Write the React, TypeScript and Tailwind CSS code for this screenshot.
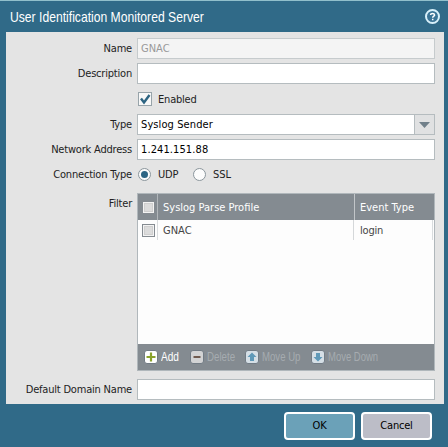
import type { ReactNode } from "react";

const field = "h-[21px] w-[298px] shrink-0 border border-[#b5bcbf] bg-white px-[3px] leading-[20px] tracking-[0.1px] text-black";

function Row({ label, children, className = "" }: { label: string; children: ReactNode; className?: string }) {
  return (
    <div className={`flex h-[21px] items-center ${className}`}>
      <div className="mr-[5px] w-[126px] shrink-0 pt-[2px] text-right whitespace-nowrap text-[#222]">{label}</div>
      {children}
    </div>
  );
}

function Radio({ checked = false }: { checked?: boolean }) {
  return (
    <span className="flex size-[13px] items-center justify-center rounded-full border border-[#8b969c] bg-[#fcfcfc]">
      {checked && <span className="size-[7px] rounded-full bg-[#2c6584]" />}
    </span>
  );
}

function Box() {
  return (
    <span className="ml-px block size-[13px] shrink-0 border border-[#858b91] bg-[#f3f3f3] p-px">
      <span className="block size-full border border-[#cfcfcf] bg-[#dcdcdc]" />
    </span>
  );
}

function ToolIcon({ kind }: { kind: "add" | "delete" | "up" | "down" }) {
  return (
    <svg width="14" height="14" viewBox="0 0 14 14" className="shrink-0">
      <rect x="0.5" y="0.5" width="13" height="13" rx="2.5" fill={kind === "add" ? "#fff" : kind === "delete" ? "#d2d3d4" : "#d5dfe6"} stroke="#727c85" />
      {kind === "add" && <path d="M7 2.5v9M2.5 7h9" stroke="#8aa32c" strokeWidth="2.2" />}
      {kind === "delete" && <path d="M3.5 7h7" stroke="#705b50" strokeWidth="2" />}
      {kind === "up" && <path d="M7 2.5 11.5 7H9v4H5V7H2.5z" fill="#5f99b8" />}
      {kind === "down" && <path d="M7 11.5 2.5 7H5V3h4v4h2.5z" fill="#5f99b8" />}
    </svg>
  );
}

export default function App() {
  return (
    <div className="flex h-[447px] w-[448px] flex-col overflow-hidden border-t border-[#91bfcb] bg-[#306a88] font-['DejaVu_Sans_Condensed','DejaVu_Sans',sans-serif] text-[11px] tracking-[-0.2px] [font-stretch:condensed]">
      <header className="flex h-[31px] shrink-0 items-center justify-between pr-[8px] pl-[10px]">
        <h1 className="origin-left scale-x-[0.81] pt-px font-['Liberation_Sans',sans-serif] text-[15px] tracking-normal whitespace-nowrap text-white [font-stretch:normal]">
          User Identification Monitored Server
        </h1>
        <svg width="15" height="15" viewBox="0 0 15 15">
          <circle cx="7.5" cy="7.5" r="6.5" fill="#3b7597" stroke="#d7f0fa" strokeWidth="2" />
          <path d="M5.5 6Q5.6 4.4 7.5 4.4T9.6 6C9.6 7.2 7.7 7.2 7.7 8.7M7.7 9.8v1.4" fill="none" stroke="#fff" strokeWidth="1.5" />
        </svg>
      </header>
      <main className="ml-[6px] flex h-[372px] w-[438px] shrink-0 flex-col bg-[#e4e4e4] pt-[6px]">
        <Row label="Name">
          <div className="h-[21px] w-[298px] border border-[#c6cbcd] bg-[#f4f4f4] px-[3px] leading-[20px] tracking-normal text-[#999]">GNAC</div>
        </Row>
        <Row label="Description" className="mt-[4px]"><div className={field} /></Row>
        <div className="mt-[4px] flex h-[21px] items-center pl-[132px]">
          <svg width="14" height="14" viewBox="0 0 14 14">
            <rect x="0.5" y="0.5" width="13" height="13" fill="#f8f8f8" stroke="#98a4aa" />
            <path d="m3 6.5 3 4L11.5 3" fill="none" stroke="#2d6482" strokeWidth="2.4" />
          </svg>
          <span className="ml-[6px] pt-[4px] text-[#222]">Enabled</span>
        </div>
        <Row label="Type" className="mt-[5px]">
          <div className={`${field} flex justify-between pr-0`}>
            <span>Syslog Sender</span>
            <span className="flex w-[20px] items-center justify-center border-l border-[#b5bcbf] bg-[#e0e1e2]">
              <svg width="11" height="6" viewBox="0 0 11 6"><path d="M0 0h11L5.5 6z" fill="#71808a" /></svg>
            </span>
          </div>
        </Row>
        <Row label="Network Address" className="mt-[4px]"><div className={field}>1.241.151.88</div></Row>
        <Row label="Connection Type" className="mt-[4px]">
          <div className="flex items-center pl-px text-[#222]">
            <Radio checked />
            <span className="ml-[7px] w-[35px] pt-[2px]">UDP</span>
            <Radio />
            <span className="ml-[7px] pt-[2px] tracking-normal">SSL</span>
          </div>
        </Row>
        <div className="mt-[8px] flex h-[178px]">
          <div className="mr-[5px] w-[126px] pt-[3px] text-right text-[#222]">Filter</div>
          <div className="flex w-[298px] flex-col border border-[#b0b7bb] bg-[#fdfdfd]">
            <div className="flex h-[26px] shrink-0 bg-[#848b91] tracking-normal text-white">
              <div className="flex w-[20px] items-center justify-center border-r border-[#b1b6ba]"><Box /></div>
              <div className="flex w-[197px] items-center border-r border-[#c2c6c9] pt-[3px] pl-[5px]">Syslog Parse Profile</div>
              <div className="flex flex-1 items-center pt-[3px] pl-[5px]">Event Type</div>
            </div>
            <div className="flex h-[20px] shrink-0 text-[#454545]">
              <div className="flex w-[20px] items-center justify-center border-r border-[#d9dcde]"><Box /></div>
              <div className="flex w-[196px] items-center border-r border-[#d5d8da] pt-[3px] pl-[5px] tracking-normal">GNAC</div>
              <div className="mr-px flex flex-1 items-center border-r border-[#d9dcde] pt-[3px] pl-[6px]">login</div>
            </div>
            <div className="flex-1" />
            <div className="flex h-[26px] shrink-0 items-center bg-[#848b91] pl-[6px] font-['Liberation_Sans',sans-serif] text-[12px] tracking-normal whitespace-nowrap text-[#a6abb0] [font-stretch:normal]">
              <div className="flex w-[46px] items-center gap-[3px]"><ToolIcon kind="add" /><span className="origin-left scale-x-[0.84] text-white">Add</span></div>
              <div className="flex w-[55px] items-center gap-[3px]"><ToolIcon kind="delete" /><span className="origin-left scale-x-[0.81]">Delete</span></div>
              <div className="flex w-[66px] items-center gap-[3px]"><ToolIcon kind="up" /><span className="origin-left scale-x-[0.8]">Move Up</span></div>
              <div className="flex items-center gap-[3px]"><ToolIcon kind="down" /><span className="origin-left scale-x-[0.79]">Move Down</span></div>
            </div>
          </div>
        </div>
        <Row label="Default Domain Name" className="mt-[8px]"><div className={field} /></Row>
      </main>
      <footer className="flex justify-end gap-[6px] pt-[8px] pr-[16px]">
        <button className="h-[28px] w-[71px] rounded-[4px] border-2 border-white bg-[#6ba1b8] pt-px text-black">OK</button>
        <button className="h-[28px] w-[71px] rounded-[4px] border-2 border-white bg-[#bcbdc7] pt-px text-black">Cancel</button>
      </footer>
    </div>
  );
}
